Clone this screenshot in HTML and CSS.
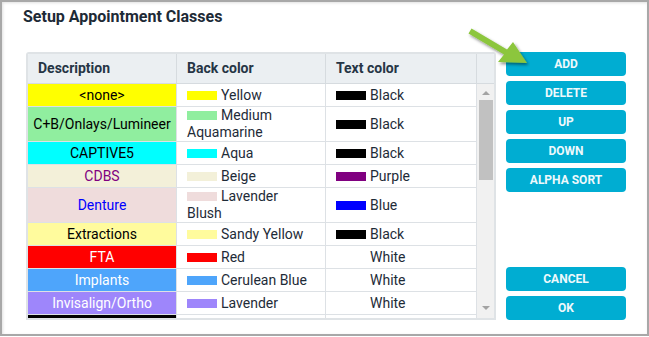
FILE: index.html
```html
<!DOCTYPE html>
<html lang="en">
 <head>
  <meta charset="utf-8">
  <title>Setup Appointment Classes</title>
  <link rel="stylesheet" href="styles.css">
 </head>
 <body>

  <div class="window">
    <h1 class="title">Setup Appointment Classes</h1>

    <div class="content">
      <div class="grid">
        <div class="grid-head">
          <div class="hcell">Description</div>
          <div class="hcell">Back color</div>
          <div class="hcell">Text color</div>
          <div class="hcell"></div>
        </div>
        <div class="grid-body">
          <div class="rows">
            <div class="row">
              <div class="desc" style="background:#ffff00;color:#000">&lt;none&gt;</div>
              <div class="cell"><span><i class="swatch" style="background:#ffff00"></i>Yellow</span></div>
              <div class="cell"><span><i class="swatch" style="background:#000"></i>Black</span></div>
            </div>
            <div class="row">
              <div class="desc" style="background:#90ee9f;color:#000">C+B/Onlays/Lumineer</div>
              <div class="cell"><span><i class="swatch" style="background:#90ee9f"></i>Medium Aquamarine</span></div>
              <div class="cell"><span><i class="swatch" style="background:#000"></i>Black</span></div>
            </div>
            <div class="row">
              <div class="desc" style="background:#00ffff;color:#000">CAPTIVE5</div>
              <div class="cell"><span><i class="swatch" style="background:#00ffff"></i>Aqua</span></div>
              <div class="cell"><span><i class="swatch" style="background:#000"></i>Black</span></div>
            </div>
            <div class="row">
              <div class="desc" style="background:#f3f0d9;color:#800080">CDBS</div>
              <div class="cell"><span><i class="swatch" style="background:#f3f0d9"></i>Beige</span></div>
              <div class="cell"><span><i class="swatch" style="background:#800080"></i>Purple</span></div>
            </div>
            <div class="row">
              <div class="desc" style="background:#efdcdc;color:#0000ff">Denture</div>
              <div class="cell"><span><i class="swatch" style="background:#efdcdc"></i>Lavender Blush</span></div>
              <div class="cell"><span><i class="swatch" style="background:#0000ff"></i>Blue</span></div>
            </div>
            <div class="row">
              <div class="desc" style="background:#fffb9d;color:#000">Extractions</div>
              <div class="cell"><span><i class="swatch" style="background:#fffb9d"></i>Sandy Yellow</span></div>
              <div class="cell"><span><i class="swatch" style="background:#000"></i>Black</span></div>
            </div>
            <div class="row">
              <div class="desc" style="background:#ff0000;color:#fff">FTA</div>
              <div class="cell"><span><i class="swatch" style="background:#ff0000"></i>Red</span></div>
              <div class="cell"><span><i class="swatch" style="background:#fff"></i>White</span></div>
            </div>
            <div class="row">
              <div class="desc" style="background:#4ea5fb;color:#fff">Implants</div>
              <div class="cell"><span><i class="swatch" style="background:#4ea5fb"></i>Cerulean Blue</span></div>
              <div class="cell"><span><i class="swatch" style="background:#fff"></i>White</span></div>
            </div>
            <div class="row">
              <div class="desc" style="background:#9e86fb;color:#fff">Invisalign/Ortho</div>
              <div class="cell"><span><i class="swatch" style="background:#9e86fb"></i>Lavender</span></div>
              <div class="cell"><span><i class="swatch" style="background:#fff"></i>White</span></div>
            </div>
            <div class="row">
              <div class="desc" style="background:#000"></div>
              <div class="cell"></div>
              <div class="cell"></div>
            </div>
          </div>
          <div class="scrollbar">
            <div class="sb-up"></div>
            <div class="sb-thumb"></div>
            <div class="sb-down"></div>
          </div>
        </div>
      </div><!-- grid -->

      <div class="buttons">
        <button class="btn">ADD</button>
        <button class="btn">DELETE</button>
        <button class="btn">UP</button>
        <button class="btn">DOWN</button>
        <button class="btn">ALPHA SORT</button>
        <button class="btn btn-push">CANCEL</button>
        <button class="btn">OK</button>
      </div>
    </div>

    <svg class="pointer" width="70" height="50" viewBox="460 22 70 50">
      <defs>
        <filter id="shade" x="-20%" y="-20%" width="150%" height="150%">
          <feDropShadow dx="1.5" dy="2" stdDeviation="1.5" flood-color="#000" flood-opacity="0.45"/>
        </filter>
      </defs>
      <polygon filter="url(#shade)" fill="#8cc63e"
        points="471.5,28.4 507,49.4 513,42 527,63 498,62 504,54.6 468.5,33.6"/>
    </svg>
  </div>

 </body>
</html>
```

FILE: styles.css
```css
*{box-sizing:border-box;margin:0;padding:0}
body{background:#fff;font-family:Roboto,"Liberation Sans",sans-serif;color:#1e2b38}
.window{position:relative;width:649px;height:336px;border:2px solid #a8a8a8;box-shadow:inset 1px 1px 3px rgba(0,0,0,.12);background:#fff}
.title{font-size:16px;font-weight:700;line-height:19px;padding:5px 0 0 21px;color:#1d2a36}
.content{display:flex;gap:10px;margin:26px 0 0 24px;height:268px}
.grid{width:470px;height:268px;border:2px solid #dfe3e6;border-radius:3px 3px 0 0;display:flex;flex-flow:column;overflow:hidden}
.grid-head{display:grid;grid-template-columns:149px 149px 151px 1fr;background:#ebeff2;border-bottom:1px solid #d6dbdf;height:30px}
.hcell{font-size:14px;font-weight:700;color:#263545;padding:0 10px;line-height:29px;border-right:1px solid #d6dbdf}
.hcell:last-child{border-right:0}
.grid-body{flex:1;display:flex;min-height:0}
.rows{width:449px;overflow:hidden}
.row{display:grid;grid-template-columns:149px 149px 151px}
.desc,.cell{font-size:14px;line-height:17px;min-height:23px;border-right:1px solid #dde1e5;border-bottom:1px solid #dde1e5;display:flex;align-items:center}
.desc{justify-content:center;text-align:center;padding:0 1px}
.cell{padding:0 12px 0 10px;background:#fff}
.swatch{display:inline-block;width:30px;height:9px;margin-right:4px;vertical-align:0}
.scrollbar{width:17px;background:#f1f1f1;display:flex;flex-flow:column;align-items:center}
.sb-up,.sb-down{width:0;height:0;border-left:4px solid transparent;border-right:4px solid transparent}
.sb-up{border-bottom:4px solid #a3a3a3;margin-top:7px}
.sb-thumb{width:14px;height:80px;background:#c1c1c1;margin-top:5px}
.sb-down{border-top:4px solid #a3a3a3;margin-top:auto;margin-bottom:8px}
.buttons{width:120px;display:flex;flex-flow:column;gap:5px}
.btn{height:24px;border:0;border-radius:4px;background:#00add2;color:#eef9fc;font-family:Roboto,"Liberation Sans",sans-serif;font-size:12px;font-weight:700;cursor:pointer}
.btn-push{margin-top:auto}
.pointer{position:absolute;left:458px;top:20px}
```
